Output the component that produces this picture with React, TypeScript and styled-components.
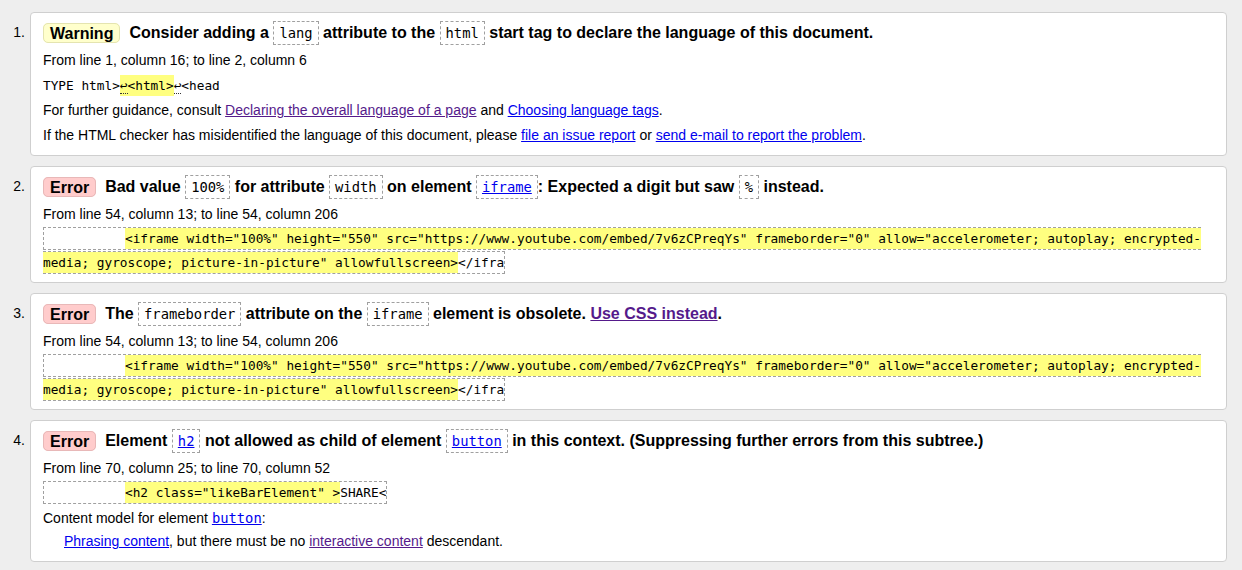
import React from "react";
import styled, { createGlobalStyle } from "styled-components";

const GlobalStyle = createGlobalStyle`
  html, body {
    margin: 0;
    padding: 0;
    background: #eeeeee;
  }
  body {
    font-family: "Liberation Sans", Arial, sans-serif;
    color: #000;
  }
`;

const MONO = `"DejaVu Sans Mono", "Liberation Mono", monospace`;

const List = styled.ol`
  list-style: none;
  margin: 0;
  padding: 12px 15px 10px 0;
  display: flex;
  flex-direction: column;
  gap: 10px;
`;

const Item = styled.li`
  display: grid;
  grid-template-columns: 25px 1fr;
  column-gap: 5px;
`;

const Num = styled.span`
  text-align: right;
  font-size: 14px;
  line-height: 29px;
  padding-top: 6px;
`;

const Card = styled.div`
  background: #fff;
  border: 1px solid #cfcfcf;
  border-radius: 4px;
  padding: 5px 12px 7px;
`;

const Title = styled.p`
  margin: 0;
  font-size: 16px;
  font-weight: bold;
  line-height: 29px;
`;

const Badge = styled.strong<{ $kind: "warning" | "error" }>`
  padding: 0.5px 6px;
  margin-right: 9px;
  border-radius: 5px;
  border: 1px solid ${(p) => (p.$kind === "warning" ? "#e4e4b0" : "#e8b8b8")};
  background: ${(p) => (p.$kind === "warning" ? "#ffffcc" : "#ffcccc")};
`;

const Code = styled.code`
  font-family: ${MONO};
  font-size: 13.8px;
  font-weight: normal;
  padding: 3px 5px;
  border: 1px dashed #a0a0a0;
  background: #fff;
`;

const Line = styled.p`
  margin: 0;
  font-size: 14px;
  line-height: 25px;
`;

const ExtractLine = styled.p<{ $tight?: boolean }>`
  margin: 0;
  font-family: ${MONO};
  font-size: 12.77px;
  line-height: ${(p) => (p.$tight ? "24px" : "25px")};
  white-space: pre;
`;

const Extract = styled.code<{ $plain?: boolean }>`
  font-family: ${MONO};
  font-size: 12.77px;
  padding: 3px 0;
  border: ${(p) => (p.$plain ? "none" : "1px dashed #a0a0a0")};
`;

const Indent = styled.span`
  display: inline-block;
  width: 81px;
`;

const Mark = styled.b`
  font-weight: normal;
  background: #ffff80;
  padding: 3px 0;
`;

const Lf = styled.span`
  border-bottom: 1px dotted #333;
`;

const Link = styled.a<{ $visited?: boolean }>`
  color: ${(p) => (p.$visited ? "#551a8b" : "#0000ee")};
  text-decoration: underline;
  cursor: pointer;
`;

const CodeLink = styled(Link)`
  font-family: ${MONO};
  font-size: 13.8px;
`;

const Dt = styled.p`
  margin: 1px 0 0;
  font-size: 14px;
  line-height: 25px;
`;

const Dd = styled.p`
  margin: 0 0 3px 21px;
  font-size: 14px;
  line-height: 20px;
`;

const IFRAME_1 =
  '<iframe width="100%" height="550" src="https://www.youtube.com/embed/7v6zCPreqYs" frameborder="0" allow="accelerometer; autoplay; encrypted-';
const IFRAME_2 = 'media; gyroscope; picture-in-picture" allowfullscreen>';

const IframeExtract: React.FC = () => (
  <ExtractLine $tight>
    <Extract>
      <Indent />
      <Mark>{IFRAME_1}</Mark>
      <br />
      <Mark>{IFRAME_2}</Mark>
      {"</ifra"}
    </Extract>
  </ExtractLine>
);

export default function App() {
  return (
    <>
      <GlobalStyle />
      <List>
        <Item>
          <Num>1.</Num>
          <Card>
            <Title>
              <Badge $kind="warning">Warning</Badge>
              Consider adding a <Code>lang</Code> attribute to the <Code>html</Code> start tag to
              declare the language of this document.
            </Title>
            <Line>From line 1, column 16; to line 2, column 6</Line>
            <ExtractLine>
              <Extract $plain>
                {"TYPE html>"}
                <Mark>
                  <Lf>{"\u21a9"}</Lf>
                  {"<html>"}
                </Mark>
                <Lf>{"\u21a9"}</Lf>
                {"<head"}
              </Extract>
            </ExtractLine>
            <Line>
              For further guidance, consult{" "}
              <Link $visited>Declaring the overall language of a page</Link> and{" "}
              <Link>Choosing language tags</Link>.
            </Line>
            <Line>
              If the HTML checker has misidentified the language of this document, please{" "}
              <Link>file an issue report</Link> or <Link>send e-mail to report the problem</Link>.
            </Line>
          </Card>
        </Item>

        <Item>
          <Num>2.</Num>
          <Card>
            <Title>
              <Badge $kind="error">Error</Badge>
              Bad value <Code>100%</Code> for attribute <Code>width</Code> on element{" "}
              <Code>
                <Link>iframe</Link>
              </Code>
              : Expected a digit but saw <Code>%</Code> instead.
            </Title>
            <Line>From line 54, column 13; to line 54, column 206</Line>
            <IframeExtract />
          </Card>
        </Item>

        <Item>
          <Num>3.</Num>
          <Card>
            <Title>
              <Badge $kind="error">Error</Badge>
              The <Code>frameborder</Code> attribute on the <Code>iframe</Code> element is obsolete.{" "}
              <Link $visited>Use CSS instead</Link>.
            </Title>
            <Line>From line 54, column 13; to line 54, column 206</Line>
            <IframeExtract />
          </Card>
        </Item>

        <Item>
          <Num>4.</Num>
          <Card>
            <Title>
              <Badge $kind="error">Error</Badge>
              Element{" "}
              <Code>
                <Link>h2</Link>
              </Code>{" "}
              not allowed as child of element{" "}
              <Code>
                <Link>button</Link>
              </Code>{" "}
              in this context. (Suppressing further errors from this subtree.)
            </Title>
            <Line>From line 70, column 25; to line 70, column 52</Line>
            <ExtractLine $tight>
              <Extract>
                <Indent />
                <Mark>{'<h2 class="likeBarElement" >'}</Mark>
                {"SHARE<"}
              </Extract>
            </ExtractLine>
            <Dt>
              Content model for element <CodeLink>button</CodeLink>:
            </Dt>
            <Dd>
              <Link>Phrasing content</Link>, but there must be no{" "}
              <Link $visited>interactive content</Link> descendant.
            </Dd>
          </Card>
        </Item>
      </List>
    </>
  );
}
